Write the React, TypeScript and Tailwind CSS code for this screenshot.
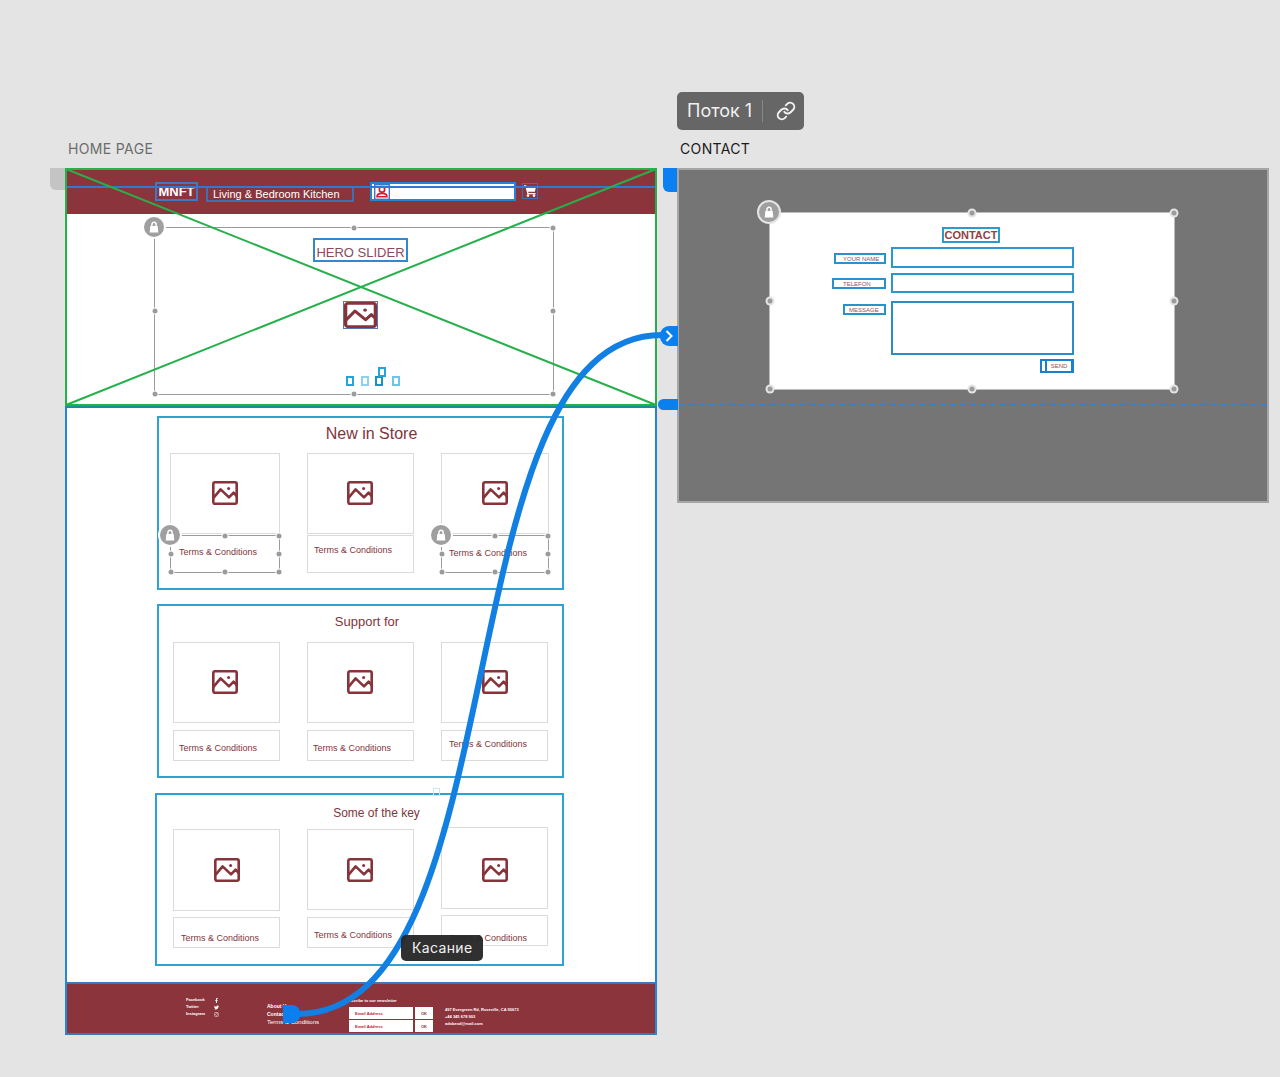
import React from "react";
import { Link } from "lucide-react";
import { FaFacebookF, FaTwitter, FaInstagram } from "react-icons/fa";

function ImageIcon({ className = "w-[26px] h-6" }: { className?: string }) {
  return (
    <svg viewBox="0 0 26 24" preserveAspectRatio="none" className={className} fill="none" stroke="#86333a" strokeWidth="2.6" strokeLinejoin="round" aria-hidden="true">
      <rect x="1.3" y="1.3" width="23.4" height="21.4" rx="1.6" />
      <path d="M1.5 16.8 8.6 8.4 17 16.4 21.6 11.6 25 15.4" />
      <circle cx="16.6" cy="7.4" r="1.5" fill="#86333a" stroke="none" />
    </svg>
  );
}

function LockBadge({ ringed = false }: { ringed?: boolean }) {
  return (
    <span
      className={
        ringed
          ? "absolute -left-[13px] -top-[13px] z-10 flex size-6 items-center justify-center rounded-full border-2 border-[#e4e4e4] bg-[#9f9f9f]"
          : "absolute -left-[11px] -top-[11px] z-10 flex size-5 items-center justify-center rounded-full bg-[#9f9f9f] ring-2 ring-white"
      }
    >
      <svg viewBox="0 0 10 12" className="h-3 w-[10px]" aria-hidden="true">
        <path d="M2.9 6V3.4a2.1 2.1 0 0 1 4.2 0V6" fill="none" stroke="#fff" strokeWidth="1.5" />
        <path d="M1.3 5h7.400l.6 6.500H.7z" fill="#fff" />
      </svg>
    </span>
  );
}

const handleSpots = [
  "left-1/2 top-0",
  "left-full top-0",
  "left-0 top-1/2",
  "left-full top-1/2",
  "left-0 top-full",
  "left-1/2 top-full",
  "left-full top-full",
];

function Handles({ ringed = false }: { ringed?: boolean }) {
  return (
    <>
      {handleSpots.map((spot) => (
        <span
          key={spot}
          className={`absolute size-[5px] -translate-x-1/2 -translate-y-1/2 rounded-full bg-[#9b9b9b] ${ringed ? "ring-2 ring-[#e4e4e4]" : "ring-1 ring-white"} ${spot}`}
        />
      ))}
      <LockBadge ringed={ringed} />
    </>
  );
}

type Card = { image: string; caption: string; locked?: boolean };
type Section = { title: string; frame: string; heading: string; cards: Card[] };

const sections: Section[] = [
  {
    title: "New in Store",
    frame: "mt-[9px] h-[174px] ml-[92px] pl-[14px]",
    heading: "h-[35px] pl-[22px] pb-[3px] text-[16px]",
    cards: [
      { image: "h-[81px] -ml-[3px] pb-[2px]", caption: "mt-px h-[38px] -ml-[3px] pl-[8px] pb-[5px]", locked: true },
      { image: "h-[81px] pb-[2px] pr-px", caption: "mt-px h-[38px] pl-[6px] pb-[9px]" },
      { image: "h-[81px] -mr-px pb-[2px]", caption: "mt-px h-[38px] -mr-px pl-[7px] pb-[3px]", locked: true },
    ],
  },
  {
    title: "Support for",
    frame: "mt-[14px] h-[174px] ml-[92px] pl-[14px]",
    heading: "h-9 pl-[13px] pb-[5px] text-[13px]",
    cards: [
      { image: "h-[81px] pb-[2px] pr-[4px]", caption: "mt-[7px] h-[31px] pl-[5px] pt-[4px]" },
      { image: "h-[81px] pb-[2px] pr-px", caption: "mt-[7px] h-[31px] pl-[5px] pt-[4px]" },
      { image: "h-[81px] pb-[2px]", caption: "mt-[7px] h-[31px] pl-[7px] pb-[4px]" },
    ],
  },
  {
    title: "Some of the key",
    frame: "mt-[15px] h-[173px] ml-[90px] pl-[16px]",
    heading: "h-[34px] pl-[32px] pt-[2px] text-[12px]",
    cards: [
      { image: "h-[82px]", caption: "mt-[6px] h-[31px] pl-[7px] pt-[10px]" },
      { image: "h-[81px] pr-px", caption: "mt-[7px] h-[31px] pl-[6px] pt-[5px]" },
      { image: "h-[82px] -mt-[2px] pt-[4px]", caption: "mt-[6px] h-[31px] pl-[7px] pt-[14px]" },
    ],
  },
];

function ProductSection({ section }: { section: Section }) {
  return (
    <section className={`mr-[93px] border-2 border-[#2ea3d3] pr-[14px] ${section.frame}`}>
      <h2 className={`flex items-center justify-center text-[#82343b] ${section.heading}`}>{section.title}</h2>
      <div className="grid grid-cols-3 gap-[27px]">
        {section.cards.map((card, i) => (
          <article key={i}>
            <div className={`flex items-center justify-center border border-[#dedada] ${card.image}`}>
              <ImageIcon />
            </div>
            <div
              className={`relative flex items-center whitespace-nowrap border text-[9px] leading-3 text-[#82343b] ${card.locked ? "border-[#9b9b9b]" : "border-[#dedada]"} ${card.caption}`}
            >
              Terms &amp; Conditions
              {card.locked && <Handles />}
            </div>
          </article>
        ))}
      </div>
    </section>
  );
}

function HomeHeader() {
  return (
    <header className="relative flex h-[46px] items-start bg-[#8b343b] pl-[90px] pt-[14px]">
      <div className="flex h-[19px] w-[43px] items-center justify-center border-2 border-[#3f79c4] text-[13px] font-bold text-white">MNFT</div>
      <nav className="ml-[8px] mt-[4px] flex h-4 w-[148px] items-center border-2 border-[#3f6fb4] pl-[5px]">
        <a href="#catalog" className="whitespace-nowrap text-[11px] text-white">Living &amp; Bedroom Kitchen</a>
      </nav>
      <label className="ml-[16px] flex h-[19px] w-[146px] items-center border-2 border-[#2185d8] bg-white pl-[2px]">
        <svg viewBox="0 0 16 16" className="size-4 shrink-0" fill="none" aria-hidden="true">
          <rect x="0.7" y="0.7" width="14.6" height="14.6" stroke="#3b78bd" strokeWidth="1.4" />
          <circle cx="8" cy="5.4" r="2.7" stroke="#d51d2d" strokeWidth="1.7" />
          <path d="M3 12.8c0-2.5 2.2-3.4 5-3.4s5 .9 5 3.4z" stroke="#d51d2d" strokeWidth="1.6" />
        </svg>
        <input type="text" aria-label="Search" className="h-3 w-full min-w-0 bg-transparent text-[9px] outline-none" />
      </label>
      <button aria-label="Cart" className="ml-[6px] mt-px flex size-4 items-center justify-center border border-[#3f6fb4]">
        <svg viewBox="0 0 14 14" className="size-[14px]" aria-hidden="true">
          <path d="M1 1.800h1.800l2.200 7.800h7.500" fill="none" stroke="#fff" strokeWidth="1.300" />
          <path d="M3 2.200h10.200l-1.400 5.600H4.600z" fill="#fff" />
          <circle cx="5" cy="11.6" r="1.3" fill="#fff" />
          <circle cx="11" cy="11.6" r="1.3" fill="#fff" />
        </svg>
      </button>
      <span className="absolute inset-x-0 top-[18px] h-[2px] bg-[#3477cf]" />
    </header>
  );
}

function Hero() {
  return (
    <div className="flex h-[193px] flex-col pb-3 pl-[89px] pr-[103px] pt-[13px]">
      <div className="relative flex grow flex-col items-center border border-[#9b9b9b] pl-[13px] pt-[10px]">
        <h1 className="flex h-6 items-center border-2 border-[#3386cf] px-px pt-[5px] text-[13px] text-[#8a4a5c]">HERO SLIDER</h1>
        <div className="mt-[39px] border border-[#5575b5] bg-white">
          <ImageIcon className="h-[26px] w-[33px]" />
        </div>
        <div className="relative ml-[25px] mt-[47px] flex h-[10px] w-[54px] justify-between">
          <span className="w-2 border-2 border-[#22a5d8]" />
          <span className="w-2 border-2 border-[#8fd0ea]" />
          <span className="w-2 border-2 border-[#1792c8]" />
          <span className="ml-[2px] w-2 border-2 border-[#6fc5e6]" />
          <span className="absolute -top-[9px] left-8 h-[10px] w-2 border-2 border-[#22a5d8]" />
        </div>
        <Handles />
      </div>
    </div>
  );
}

function Footer() {
  return (
    <footer className="relative flex h-[53px] items-start border-y-2 border-[#3c78b8] bg-[#8b343b] pl-[121px] text-[4px] font-bold leading-[7px] text-white">
      <div className="flex w-[81px] gap-[9px] pt-[12px]">
        <ul>
          <li>Facebook</li>
          <li>Twitter</li>
          <li>Instagram</li>
        </ul>
        <div className="flex flex-col gap-[2px] pt-[2px]">
          <FaFacebookF size={5} />
          <FaTwitter size={5} />
          <FaInstagram size={5} />
        </div>
      </div>
      <nav className="flex w-[82px] flex-col whitespace-nowrap pt-[18px] text-[5px] leading-[8px]">
        <a href="#about">About Us</a>
        <a href="#contact" className="relative">
          Contact
          <span className="absolute -top-[5px] left-4 z-10 h-[18px] w-[17px] rounded-r-lg bg-[#0a7ff0]" />
        </a>
        <a href="#terms" className="text-[6px] font-normal">Terms &amp; Conditions</a>
      </nav>
      <form className="flex w-[96px] flex-col gap-px pt-[13px]" onSubmit={(e) => e.preventDefault()}>
        <p className="mb-[2px] -ml-[5px] whitespace-nowrap">Subscribe to our newsletter</p>
        {[1, 2].map((n) => (
          <div key={n} className="flex gap-[2px]">
            <input
              type="email"
              aria-label={`Email Address ${n}`}
              placeholder="Email Address"
              className="h-3 w-16 bg-white pl-[6px] text-[4px] placeholder:text-[#c32030] placeholder:opacity-100"
            />
            <button className="h-3 w-[18px] bg-white text-[4px] text-[#8b343b]">OK</button>
          </div>
        ))}
      </form>
      <address className="whitespace-nowrap pt-[22px] not-italic">
        497 Evergreen Rd, Roseville, CA 95673
        <br />
        +44 345 678 903
        <br />
        adobexd@mail.com
      </address>
    </footer>
  );
}

function HomeBoard() {
  return (
    <div className="relative bg-white">
      <HomeHeader />
      <Hero />
      {sections.map((s) => (
        <ProductSection key={s.title} section={s} />
      ))}
      <div className="h-4" />
      <Footer />
      <span className="pointer-events-none absolute inset-0 border-x-2 border-[#2486d4]" />
      <span className="absolute right-[217px] top-[620px] h-2 w-[7px] border border-[#c5e8f3]" />
      <div className="pointer-events-none absolute inset-x-0 top-0 h-[240px] border-b-2 border-[#168f9a]">
        <svg className="h-full w-full" viewBox="0 0 592 238" preserveAspectRatio="none" fill="none" stroke="#25b04b" strokeWidth="2" aria-hidden="true">
          <path d="M1 1H591V237H1ZM1 1 591 237M591 1 1 237" vectorEffect="non-scaling-stroke" />
        </svg>
      </div>
      <span className="absolute -left-[15px] top-0 h-[22px] w-[15px] rounded-bl-md bg-[#c4c4c4]" />
    </div>
  );
}

const fields = [
  { id: "name", label: "YOUR NAME", row: "h-[21px]", labelBox: "w-[52px] mt-[6px] pl-[7px]" },
  { id: "telefon", label: "TELEFON", row: "mt-[5px] h-5", labelBox: "w-[54px] mt-[5px] pl-[9px]" },
  { id: "message", label: "MESSAGE", row: "mt-[8px] h-[54px]", labelBox: "w-[43px] mt-[3px] pl-[4px]" },
];

function ContactBoard() {
  return (
    <div className="relative h-[335px] border-2 border-[#a6a6a6] bg-[#757575] pl-[90px] pr-[92px] pt-[42px]">
      <div className="relative h-[178px] border border-[#bdbdbd] bg-white pt-[14px]">
        <form className="ml-[62px] mr-[100px] flex flex-col" onSubmit={(e) => e.preventDefault()}>
          <h2 className="mb-[4px] ml-[110px] flex h-4 w-[58px] items-center justify-center self-start border-2 border-[#2e9ac9] text-[11px] font-bold text-[#914148]">
            CONTACT
          </h2>
          {fields.map((f) => (
            <div key={f.id} className={`grid grid-cols-[54px_1fr] gap-[5px] ${f.row}`}>
              <label htmlFor={f.id} className={`flex h-[11px] items-center justify-self-end whitespace-nowrap border-2 border-[#2a92cb] text-[6px] leading-[6px] text-[#8a5560] ${f.labelBox}`}>
                {f.label}
              </label>
              {f.id === "message" ? (
                <textarea id={f.id} className="h-full w-full resize-none border-2 border-[#2b8cc6] bg-white p-1 text-[9px] outline-none" />
              ) : (
                <input id={f.id} type="text" className="h-full w-full border-2 border-[#2b97cb] bg-white px-1 text-[9px] outline-none" />
              )}
            </div>
          ))}
          <button className="mt-[4px] flex h-[14px] w-[34px] justify-end self-end border-2 border-r-[3px] border-[#1781cc] text-[6px] text-[#8a5560]">
            <span className="flex h-full w-[26px] items-center justify-center border-l-2 border-[#1781cc]">SEND</span>
          </button>
        </form>
        <Handles ringed />
      </div>
      <span className="absolute -left-4 -top-[2px] h-6 w-[14px] rounded-bl-md bg-[#0a80f2]" />
      <span className="absolute -left-[19px] top-[156px] flex h-5 w-[18px] items-center justify-center rounded-l-[9px] bg-[#0a80ee]">
        <svg viewBox="0 0 8 12" className="h-3 w-2" fill="none" stroke="#fff" strokeWidth="2" aria-hidden="true">
          <path d="m1.5 1 5 5-5 5" />
        </svg>
      </span>
      <span className="absolute -left-[21px] top-[229px] h-[11px] w-5 rounded-l-md bg-[#0a80ee]" />
      <span className="absolute inset-x-0 top-[234px] border-t-2 border-dashed border-[#3c7fc4]" />
    </div>
  );
}

export default function App() {
  return (
    <main className="min-h-screen bg-[#e4e4e4] pb-[42px] pl-[65px] pr-[11px] pt-[92px] font-['Liberation_Sans',Arial,sans-serif] leading-none">
      <div className="relative grid grid-cols-2 items-start gap-5">
        <section>
          <div className="flex h-[76px] items-end pb-[11px] pl-[3px] font-['Inter',sans-serif] text-[14px] leading-4 tracking-wide text-[#6c6c6c]">HOME PAGE</div>
          <HomeBoard />
        </section>
        <section>
          <div className="flex h-[76px] flex-col items-start justify-between pb-[11px] font-['Inter',sans-serif]">
            <div className="flex h-[38px] items-center rounded-[5px] bg-[#666666]">
              <button className="h-full pl-[10px] pr-[10px] text-[18px] text-[#f0f0f0]">Поток 1</button>
              <span className="h-[22px] w-px bg-[#878787]" />
              <button aria-label="Flow link" className="flex h-full items-center pl-[13px] pr-[8px] text-[#f2f2f2]">
                <Link size={20} strokeWidth={2.3} />
              </button>
            </div>
            <div className="pl-[3px] text-[14px] leading-4 tracking-wide text-[#1a1a1a]">CONTACT</div>
          </div>
          <ContactBoard />
        </section>
        <svg
          className="pointer-events-none absolute inset-0 h-full w-full"
          viewBox="0 0 1204 943"
          preserveAspectRatio="none"
          fill="none"
          aria-hidden="true"
        >
          <path d="M232 922C456 922 376 243 597 243" stroke="#127fe2" strokeWidth="6" vectorEffect="non-scaling-stroke" />
        </svg>
        <div role="tooltip" className="absolute left-[336px] top-[843px] flex h-[26px] items-center rounded-[5px] bg-[#252525]/95 px-[11px] font-['Inter',sans-serif] text-[14px] tracking-wide text-[#f2f2f2]">
          Касание
        </div>
      </div>
    </main>
  );
}
